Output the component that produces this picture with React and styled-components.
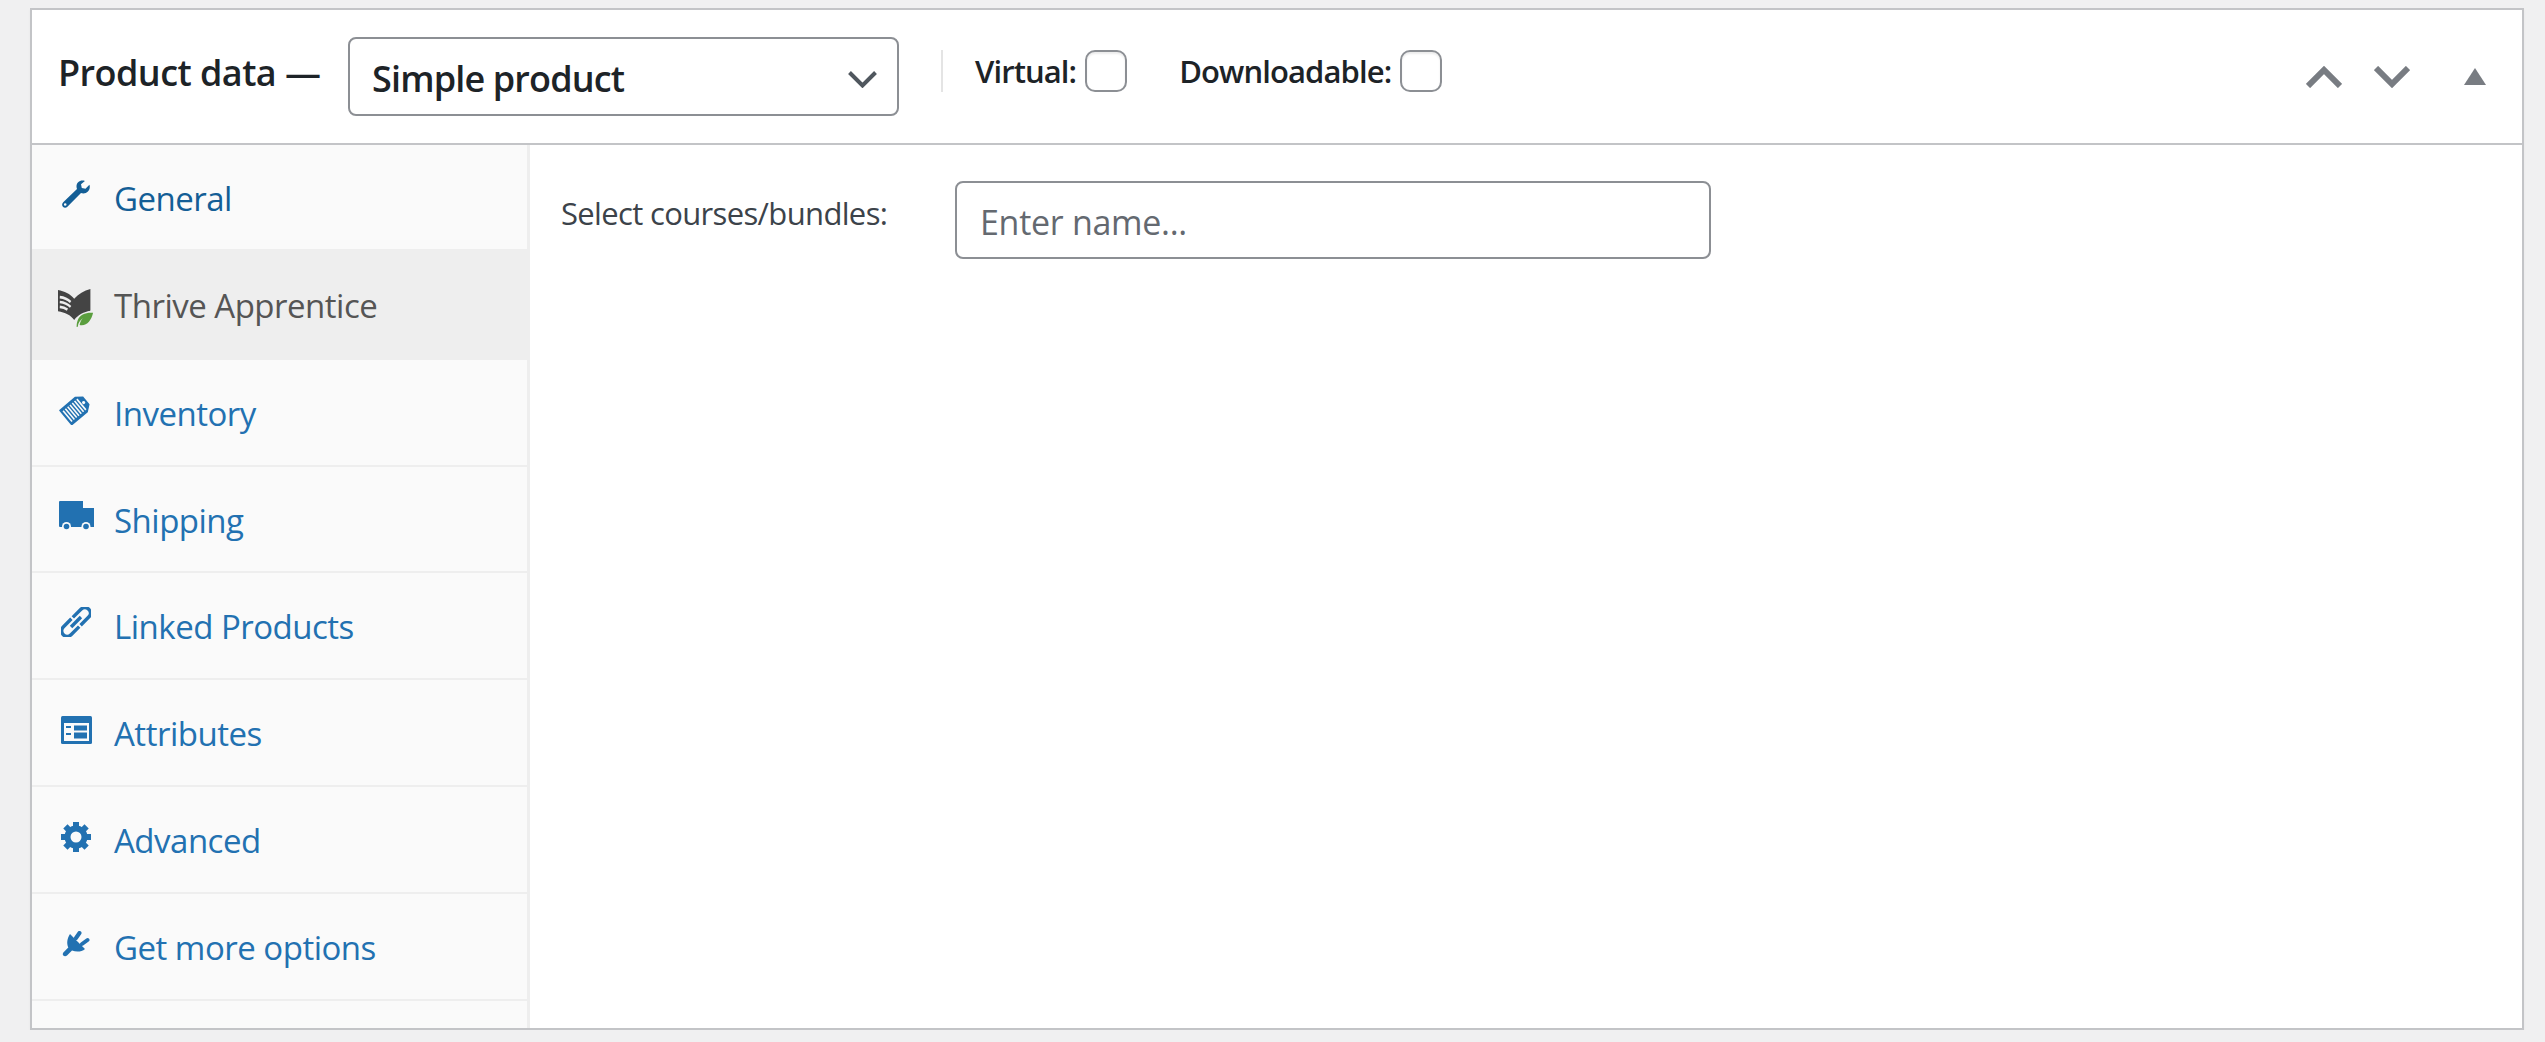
import styled, { createGlobalStyle } from 'styled-components'

const GlobalStyle = createGlobalStyle`
  html, body { margin: 0; padding: 0; background: #f0f0f1; }
  body { font-family: "Open Sans", "Noto Sans", sans-serif; }
`

const Panel = styled.div`
  box-sizing: border-box;
  margin: 8px 21px 0 30px;
  height: 1022px;
  background: #fff;
  border: 2px solid #c3c4c7;
  box-shadow: 0 2px 3px rgba(0, 0, 0, 0.04);
`

const Header = styled.header`
  box-sizing: border-box;
  height: 135px;
  border-bottom: 2px solid #c3c4c7;
  display: flex;
  align-items: center;
  padding: 0 36px 0 26px;
`

const Title = styled.h2`
  margin: 0 27px 8px 0;
  width: 263px;
  font-size: 36px;
  font-weight: 600;
  letter-spacing: -0.55px;
  white-space: nowrap;
  color: #1d2327;
`

const SelectBox = styled.div`
  position: relative;
  width: 551px;
  height: 79px;
`

const ProductSelect = styled.select`
  box-sizing: border-box;
  width: 100%;
  height: 100%;
  appearance: none;
  background: #fff;
  border: 2px solid #8c8f94;
  border-radius: 8px;
  padding: 3px 60px 0 22px;
  font-family: inherit;
  font-size: 36px;
  font-weight: 600;
  letter-spacing: -0.85px;
  color: #1d2327;
`

const Chevron = styled.svg`
  position: absolute;
  right: 22px;
  top: 34px;
  pointer-events: none;
`

const TypeOptions = styled.div`
  display: flex;
  align-items: center;
  height: 42px;
  margin: -11px 0 0 42px;
  padding-left: 32px;
  border-left: 2px solid #e4e4e4;
`

const CheckLabel = styled.label`
  display: flex;
  align-items: center;
  gap: 9px;
  margin-right: 52px;
  font-size: 31px;
  font-weight: 600;
  letter-spacing: -0.9px;
  color: #1d2327;
`

const CheckBox = styled.input`
  appearance: none;
  box-sizing: border-box;
  width: 42px;
  height: 42px;
  margin: 0;
  background: #fff;
  border: 2px solid #8c8f94;
  border-radius: 10px;
  box-shadow: inset 0 2px 2px rgba(0, 0, 0, 0.08);
`

const Actions = styled.div`
  margin-left: auto;
  display: flex;
  align-items: center;
`

const ActionButton = styled.svg`
  display: block;
  margin-left: ${(p) => p.$gap}px;
  fill: none;
  stroke: #787c82;
`

const Body = styled.div`
  display: flex;
  height: 883px;
`

const Tabs = styled.ul`
  box-sizing: border-box;
  width: 498px;
  margin: 0;
  padding: 0;
  list-style: none;
  background: #fafafa;
  border-right: 3px solid #eee;
`

const Tab = styled.li`
  box-sizing: border-box;
  height: ${(p) => p.$height}px;
  display: flex;
  align-items: center;
  padding: 2px 0 0 26px;
  border-bottom: 2px solid #eee;
  background: ${(p) => (p.$active ? '#eee' : 'transparent')};
  color: ${(p) => (p.$active ? '#555' : p.$dark ? '#135e96' : '#2271b1')};
  font-size: 33px;
  letter-spacing: -0.5px;
`

const TabIcon = styled.span`
  display: flex;
  justify-content: center;
  width: 36px;
  margin: 0 20px ${(p) => p.$lift}px 0;
`

const Content = styled.div`
  flex: 1;
  padding: 36px 0 0 31px;
`

const FormRow = styled.div`
  display: flex;
`

const FieldLabel = styled.label`
  width: 394px;
  padding-top: 11px;
  font-size: 31px;
  letter-spacing: -0.65px;
  color: #3c434a;
`

const NameInput = styled.input`
  box-sizing: border-box;
  width: 756px;
  height: 78px;
  padding: 4px 23px 0;
  background: #fff;
  border: 2px solid #8c8f94;
  border-radius: 8px;
  font-family: inherit;
  font-size: 34px;
  letter-spacing: -0.3px;

  &::placeholder {
    color: #646970;
    opacity: 1;
  }
`

const WrenchIcon = () => (
  <svg width="28" height="28" viewBox="0 0 28 28" fill="currentColor">
    <path
      fillRule="evenodd"
      d="M20.5.5C17 .5 14.5 3 14.5 6.5c0 1 .2 1.8.5 2.5L1.2 22.3c-1.4 1.4-1.4 3.3-.3 4.5 1.3 1.2 3.2 1.2 4.5-.1L19 13c.7.3 1.5.4 2.3.4 3.700 0 6.500-2.900 6.500-6.400 0-.8-.1-1.500-.4-2.200l-3.900 3.900-3.700-.7-.8-3.800 3.900-3.300C22.200.6 21.400.5 20.500.5ZM3.200 23.200a1.300 1.300 0 1 1 0 2.600 1.300 1.300 0 0 1 0-2.600Z"
    />
  </svg>
)

const BookIcon = () => (
  <svg width="40" height="39" viewBox="0 0 40 36" preserveAspectRatio="none">
    <path
      fill="#444"
      d="M0 1C7 2 13.500 4.500 18 9 22.500 4.500 29 1.500 36 0v20c-7.500 1-13.500 3.500-18 8.500C14 24 8 21.500 0 20.500Z"
    />
    <path
      fill="none"
      stroke="#eee"
      strokeWidth="2.400"
      d="M2 7.500c5 .4 9 2 12 4.500M2 12c5 .4 9 2 12 4.500M2 16.500c3 .2 6 1 8.500 2.500"
    />
    <path fill="#eee" d="M36 20h4v15H20v-6l5-5Z" />
    <path
      fill="#5a9e3e"
      d="M39 22c-8-.5-14.500 1.500-17 6.500-1 2-1.300 4-1.300 6.500l1.300-.2c.3-3.300 2.500-6.300 6-8-2 1.500-3.500 3.700-4 6.500 7.500 1.500 13-3.800 15-11.300Z"
    />
  </svg>
)

const TagIcon = () => (
  <svg width="34" height="32" viewBox="0 0 34 32">
    <g transform="rotate(-40 17 16)">
      <path
        fill="currentColor"
        d="M4 6h20l6.500 5v10L24 26H4a1 1 0 0 1-1-1V7a1 1 0 0 1 1-1Z"
      />
      <path
        stroke="#fafafa"
        strokeWidth="1.600"
        d="M6 9v14M9 9v14M12 9v14M15 9v14M18 9v14M21 9v14M24 9v14"
      />
      <circle cx="27" cy="16" r="1.600" fill="#fafafa" />
    </g>
  </svg>
)

const TruckIcon = () => (
  <svg width="35" height="30" viewBox="0 0 35 30" fill="currentColor">
    <path d="M1 0h23v7h11v19H1a1 1 0 0 1-1-1V1a1 1 0 0 1 1-1Z" />
    <circle cx="7.500" cy="25.500" r="4.500" fill="#fafafa" />
    <circle cx="7.500" cy="25.500" r="2.800" />
    <circle cx="27" cy="25.500" r="4.500" fill="#fafafa" />
    <circle cx="27" cy="25.500" r="2.800" />
  </svg>
)

const LinkIcon = () => (
  <svg width="30" height="30" viewBox="0 0 30 30" fill="none" stroke="currentColor" strokeWidth="3.400">
    <g transform="rotate(-45 15 15)">
      <path d="M14 9.500H2.500a5.500 5.500 0 0 0 0 11H14" />
      <path d="M16 9.500h11.500a5.500 5.500 0 0 1 0 11H16" />
      <path d="M8 15h14" />
    </g>
  </svg>
)

const AttributesIcon = () => (
  <svg width="31" height="28" viewBox="0 0 31 28">
    <rect width="31" height="28" rx="1.500" fill="currentColor" />
    <rect x="3" y="7" width="25" height="18" fill="#fafafa" />
    <path
      fill="currentColor"
      d="M5 10h5v2H5ZM5 17h5v2H5ZM13 9.500h13v5H13ZM13 16.500h13v6H13Z"
    />
  </svg>
)

const GearIcon = () => (
  <svg width="30" height="30" viewBox="0 0 30 30" fill="none" stroke="currentColor">
    <circle cx="15" cy="15" r="8.500" strokeWidth="6" />
    {[0, 45, 90, 135].map((angle) => (
      <path
        key={angle}
        d="M15 0v30"
        strokeWidth="6"
        transform={`rotate(${angle} 15 15)`}
        strokeDasharray="7 16 7"
      />
    ))}
  </svg>
)

const PlugIcon = () => (
  <svg width="28" height="26" viewBox="0 0 28 26" fill="currentColor">
    <path d="M8 3 23 18c-3.500 3-8.500 3.300-13 1.500L5 24.500c-1 1-2.800 1-3.700.1-.8-.8-.7-2.300.3-3.300l4.700-4.800C4.500 12.500 5 7.500 8 3Z" />
    <path stroke="currentColor" strokeWidth="4" strokeLinecap="round" d="M14 7l3.500-5M20 13l5.500-4" />
  </svg>
)

const tabs = [
  { label: 'General', icon: <WrenchIcon />, lift: 8, dark: true, height: 106 },
  { label: 'Thrive Apprentice', icon: <BookIcon />, lift: -6, active: true, height: 109 },
  { label: 'Inventory', icon: <TagIcon />, lift: 10, height: 107 },
  { label: 'Shipping', icon: <TruckIcon />, lift: 8, height: 106 },
  { label: 'Linked Products', icon: <LinkIcon />, lift: 10, height: 107 },
  { label: 'Attributes', icon: <AttributesIcon />, lift: 8, height: 107 },
  { label: 'Advanced', icon: <GearIcon />, lift: 8, height: 107 },
  { label: 'Get more options', icon: <PlugIcon />, lift: 8, height: 107 },
]

export default function App() {
  return (
    <>
      <GlobalStyle />
      <Panel>
        <Header>
          <Title>Product data —</Title>
          <SelectBox>
            <ProductSelect defaultValue="simple">
              <option value="simple">Simple product</option>
            </ProductSelect>
            <Chevron width="29" height="17" viewBox="0 0 29 17" fill="none" stroke="#50575e" strokeWidth="4">
              <path d="M1.500 1.500 14.500 14.500 27.500 1.500" />
            </Chevron>
          </SelectBox>
          <TypeOptions>
            <CheckLabel>
              Virtual:
              <CheckBox type="checkbox" />
            </CheckLabel>
            <CheckLabel>
              Downloadable:
              <CheckBox type="checkbox" />
            </CheckLabel>
          </TypeOptions>
          <Actions>
            <ActionButton $gap={0} width="36" height="22" viewBox="0 0 36 22" strokeWidth="6">
              <path d="M2 20 18 4l16 16" />
            </ActionButton>
            <ActionButton $gap={32} width="36" height="22" viewBox="0 0 36 22" strokeWidth="6">
              <path d="M2 2l16 16L34 2" />
            </ActionButton>
            <ActionButton $gap={54} width="22" height="17" viewBox="0 0 22 17">
              <path d="M11 0l11 17H0Z" fill="#787c82" stroke="none" />
            </ActionButton>
          </Actions>
        </Header>
        <Body>
          <Tabs>
            {tabs.map((tab) => (
              <Tab key={tab.label} $height={tab.height} $active={tab.active} $dark={tab.dark}>
                <TabIcon $lift={tab.lift}>{tab.icon}</TabIcon>
                {tab.label}
              </Tab>
            ))}
          </Tabs>
          <Content>
            <FormRow>
              <FieldLabel>Select courses/bundles:</FieldLabel>
              <NameInput placeholder="Enter name..." />
            </FormRow>
          </Content>
        </Body>
      </Panel>
    </>
  )
}
